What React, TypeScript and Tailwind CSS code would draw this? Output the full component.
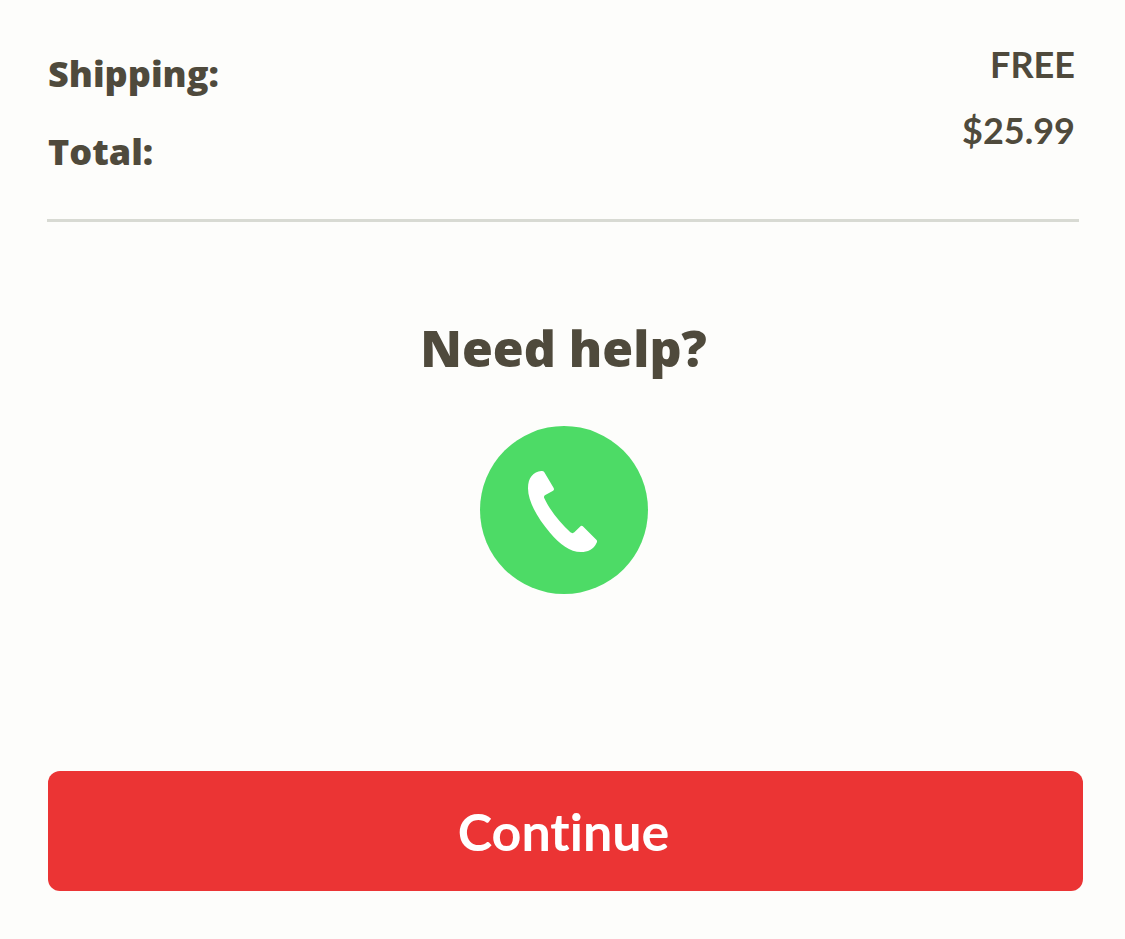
const summary = [
  { label: 'Shipping:', value: 'FREE' },
  { label: 'Total:', value: '$25.99' },
];

function OrderSummary() {
  return (
    <section className="flex justify-between border-b-[3px] border-[#d8dad3] pb-7 pt-[31px]">
      <ul className="pl-px pt-1 font-['Open_Sans',sans-serif] text-[36px] font-extrabold leading-[78px]">
        {summary.map((row) => (
          <li key={row.label}>{row.label}</li>
        ))}
      </ul>
      <ul className="pr-1 text-right text-[36px] font-bold leading-[66px]">
        {summary.map((row) => (
          <li key={row.label}>{row.value}</li>
        ))}
      </ul>
    </section>
  );
}

function CallButton() {
  return (
    <button type="button" aria-label="Call support" className="size-[168px] rounded-full bg-[#4ddb66]">
      <svg viewBox="30 33 504 504" className="size-full" fill="white" aria-hidden="true">
        <path d="M214 168Q220 167 223 172L251 219Q254 225 248 228L226 240Q220 243 223 250C238 283 270 323 301 352Q308 357 313 352L330 335Q335 330 340 335L379 374Q383 378 380 383C370 404 353 411 333 411C300 411 270 388 240 353C205 312 174 262 174 220C174 187 190 171 214 168Z" />
      </svg>
    </button>
  );
}

export default function App() {
  return (
    <main className="min-h-screen bg-[#fdfdfb] pb-12 pl-12 pr-[42px] font-['Lato',sans-serif] text-[#4f4a3c]">
      <div className="-ml-px pr-1">
        <OrderSummary />
      </div>
      <section className="flex flex-col items-center pr-1 pt-[94px]">
        <h2 className="font-['Open_Sans',sans-serif] text-[50px] font-extrabold leading-[64px]">Need help?</h2>
        <div className="pt-[46px]">
          <CallButton />
        </div>
      </section>
      <button
        type="button"
        className="mt-[171px] h-[120px] w-full rounded-xl bg-[#eb3434] pr-1 text-[52px] font-bold text-white [font-variant-ligatures:none]"
      >
        Continue
      </button>
    </main>
  );
}
